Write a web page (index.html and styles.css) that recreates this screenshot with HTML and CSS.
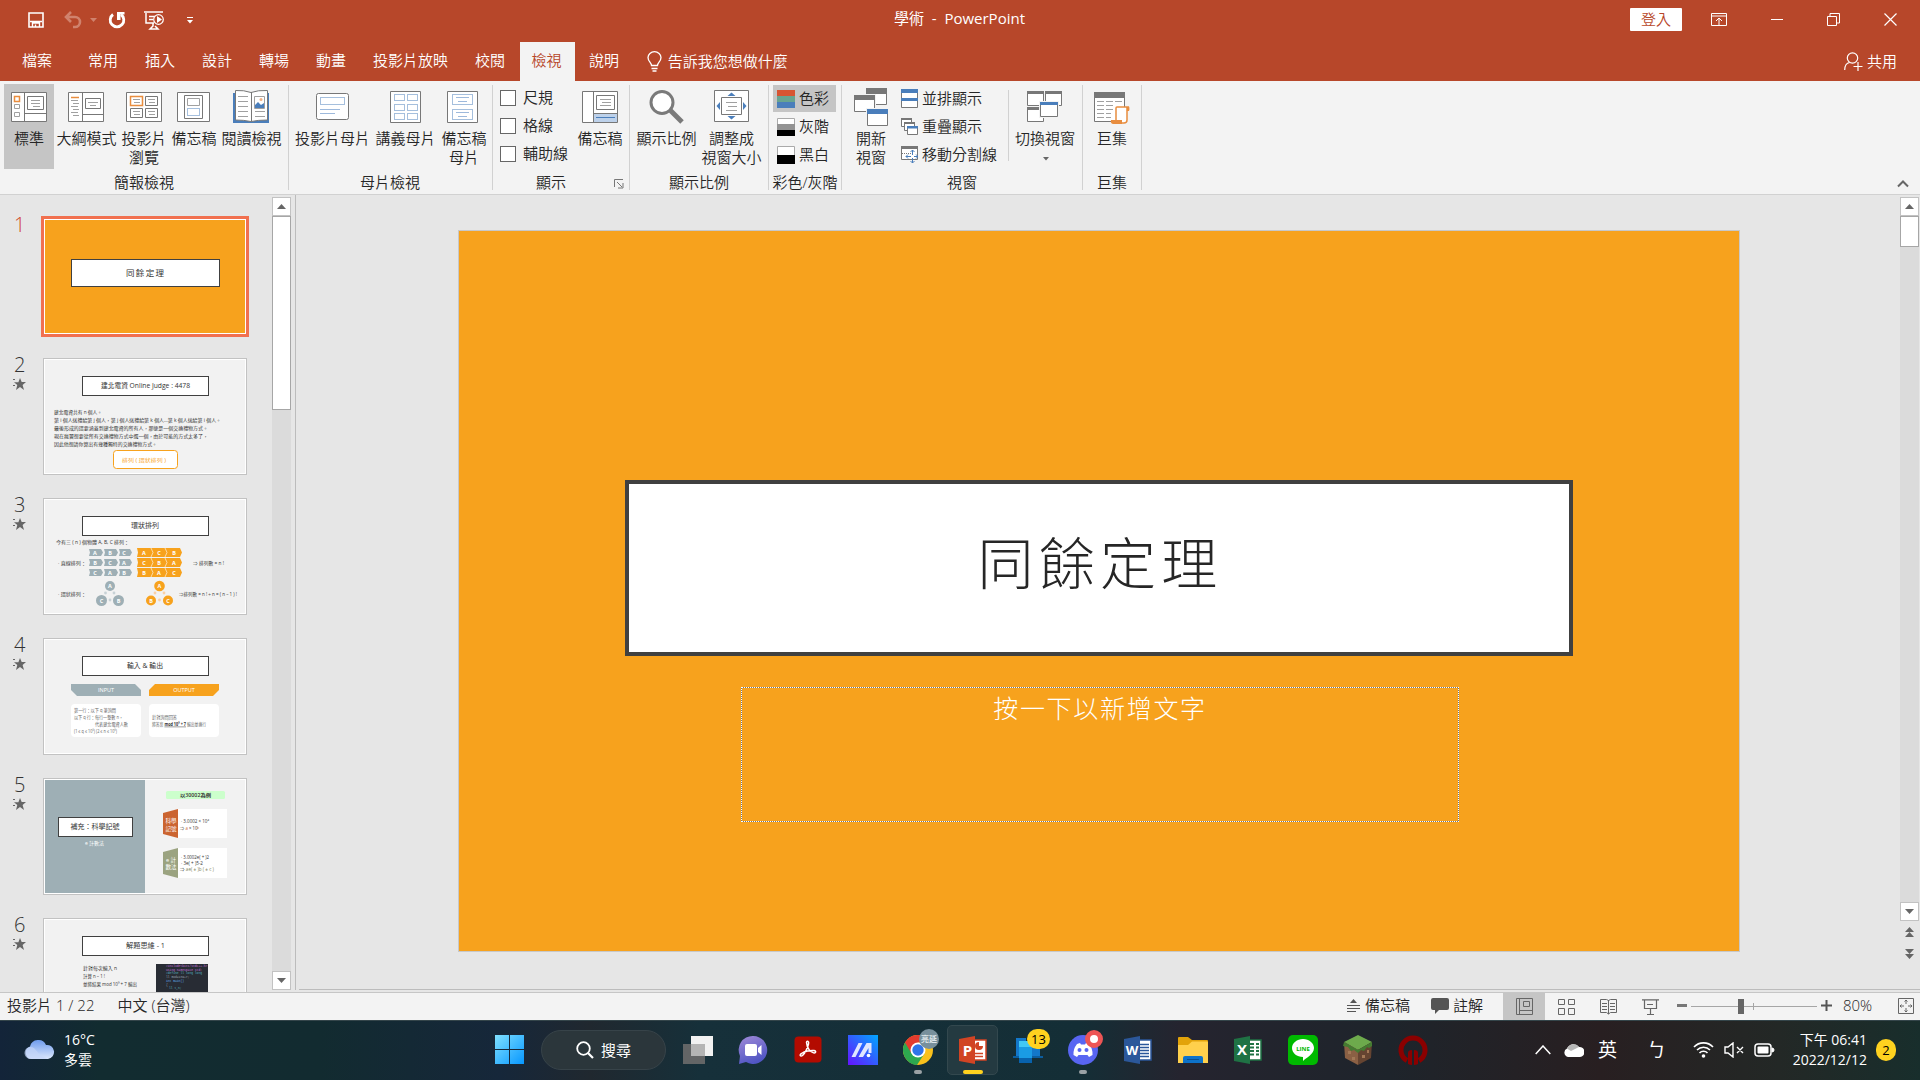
FILE: index.html
```html
<!DOCTYPE html>
<html lang="zh-Hant">
    <head>
        <meta charset="UTF-8" />
        <meta name="viewport" content="width=device-width, initial-scale=1.0" />
        <title>學術 - PowerPoint</title>
        <link rel="stylesheet" href="styles.css">
    </head>
    <body>
        <header class="titlebar">
            <div class="quick">
                <svg class="q-save" width="16" height="16" viewBox="0 0 16 16"><path d="M1 1h14v14H1z" fill="none" stroke="#fff" stroke-width="1.6"/><path d="M2 9.500h12M4.500 15v-4h7v4M7.500 12.500V15" fill="none" stroke="#fff" stroke-width="1.400"/></svg>
                <svg class="q-undo" width="19" height="18" viewBox="0 0 19 18"><path d="M7 1L2 6l5 5M2 6h9a5 5 0 0 1 0 10H9" fill="none" stroke="#d0826d" stroke-width="2.6"/></svg>
                <svg class="q-arrow" width="7" height="4"><path d="M0 0h7L3.500 4z" fill="#d0826d"/></svg>
                <svg class="q-redo" width="18" height="18" viewBox="0 0 18 18"><path d="M5 3.500a6.800 6.800 0 1 0 8 0" fill="none" stroke="#fff" stroke-width="2.800"/><path d="M9 1h7.500v2.500h-4V9H9z" fill="#fff"/></svg>
                <svg class="q-show" width="21" height="19" viewBox="0 0 21 19"><path d="M0 1h19M2 2v10h8M5 5.500h6M5 8.500h4M9 12v3l-3 3h8l-3-3" fill="none" stroke="#fff" stroke-width="1.500"/><circle cx="14.500" cy="8.500" r="4.800" fill="#b7472a" stroke="#fff" stroke-width="1.200"/><path d="M13 5l5 3.500-5 3.500z" fill="#fff"/></svg>
                <svg class="q-more" width="6" height="7"><path d="M0 .5h6" stroke="#fff"/><path d="M0 3h6L3 6.500z" fill="#fff"/></svg>
            </div>
            <div class="doc-name">學術&nbsp; -&nbsp; PowerPoint</div>
            <div class="window-btns">
                <span class="login">登入</span>
                <svg width="16" height="13"><path d="M.5.5h15v12H.5zM.5 3h15M8 12V5M5 8l3-3 3 3" fill="none" stroke="#fff"/></svg>
                <svg width="12" height="13"><path d="M0 6.500h12" stroke="#fff"/></svg>
                <svg width="13" height="13"><path d="M.5 3.500h9v9h-9zM3 3V.5h9.500V10H10" fill="none" stroke="#fff"/></svg>
                <svg width="13" height="13"><path d="M.5.5l12 12M12.500.5l-12 12" stroke="#fff" stroke-width="1.200"/></svg>
            </div>
        </header>

        <nav class="tabs">
            <span class="tab file">檔案</span>
            <span class="tab">常用</span>
            <span class="tab">插入</span>
            <span class="tab">設計</span>
            <span class="tab">轉場</span>
            <span class="tab">動畫</span>
            <span class="tab">投影片放映</span>
            <span class="tab">校閱</span>
            <span class="tab active">檢視</span>
            <span class="tab">說明</span>
            <span class="tell">
                <svg width="15" height="21" viewBox="0 0 15 21"><path d="M4.500 14.500c0-3-3.500-4-3.500-8a6.500 5.800 0 0 1 13 0c0 4-3.500 5-3.500 8zM4.500 17.500h6M5.500 20h4" fill="none" stroke="#fff" stroke-width="1.300"/></svg>
                告訴我您想做什麼
            </span>
            <span class="share">
                <svg width="19" height="19" viewBox="0 0 19 19"><circle cx="8.500" cy="6" r="5.200" fill="none" stroke="#fff" stroke-width="1.200"/><path d="M.7 18c0-4 2-7 5-7.500M14 10v9M9.500 14.500h9" fill="none" stroke="#fff" stroke-width="1.200"/></svg>
                共用
            </span>
        </nav>

        <section class="ribbon">
            <div class="group g-views">
                <div class="group-body">
                    <div class="big selected w50">
                        <svg width="40" height="40" viewBox="0 0 40 40"><path d="M2.500 4.500h35v29h-35z" class="page"/><path d="M15.500 4.500v29M15.500 25.500h22" class="ln"/><path d="M18.500 8.500h16v13h-16z" class="page"/><path d="M22 12.500h9M22 15.500h9M24 18.500h7" class="thin"/><path d="M5.500 8.500h5v5h-5z" class="orange"/><path d="M5.500 16.500h5v4h-5zM5.500 24.500h5v4h-5z" class="thin"/></svg>
                        <span>標準</span>
                    </div>
                    <div class="big w64">
                        <svg class="nudge-left" width="40" height="40" viewBox="0 0 40 40"><path d="M2.500 4.500h35v29h-35z" class="page"/><path d="M16.500 4.500v29M16.500 26.500h21" class="ln"/><path d="M19.500 10.500h15v10h-15z" class="page"/><path d="M22 14.500h10M24 17.500h6M5 12.500h7M7 15.500h6M5 18.500h7M7 21.500h6M5 24.500h7M7 27.500h6" class="thin"/><path d="M5 9.500h8" class="orange"/></svg>
                        <span>大綱模式</span>
                    </div>
                    <div class="big w50">
                        <svg width="40" height="40" viewBox="0 0 40 40"><path d="M2.500 4.500h35v29h-35z" class="page"/><path d="M21.500 8.500h12v9h-12zM6.500 20.500h12v9h-12zM21.500 20.500h12v9h-12z" class="ln"/><path d="M9 11.500h7M10 14.500h6M24 11.500h7M25 14.500h6M9 23.500h7M10 26.500h6M24 23.500h7M25 26.500h6" class="thin"/><path d="M6.500 8.500h12v9h-12z" class="orange"/></svg>
                        <span>投影片<br>瀏覽</span>
                    </div>
                    <div class="big w50">
                        <svg width="40" height="40" viewBox="0 0 40 40"><path d="M3.500 4.500h32v29h-32z" class="page"/><path d="M10.500 7.500h18v23h-18z" class="ln"/><path d="M13.500 10.500h12v7h-12z" class="thin"/><path d="M13.500 20.500h12v7h-12z" class="dots"/></svg>
                        <span>備忘稿</span>
                    </div>
                    <div class="big w64">
                        <svg class="nudge-left" width="40" height="40" viewBox="0 0 40 40"><path d="M2 5h36v30H2z" fill="#4a7ebb"/><path d="M4.500 2.500Q13 2 20 4.500Q27 2 36.500 2.500V32Q27 32 20 33.500Q13 32 4.500 32z" class="page"/><path d="M20.500 4v29" class="ln"/><path d="M7 8.500h10M7 13.500h10M7 18.500h10M7 23.500h10M7 28.500h10M24 23.500h10M24 28.500h10" class="thin"/><path d="M23.500 8.500h10v12h-10z" class="thin"/><circle cx="30" cy="11.500" r="1.500" fill="#f4b183"/><path d="M24 20v-3l3-3 3 3 3-2v5z" fill="#4a7ebb"/></svg>
                        <span>閱讀檢視</span>
                    </div>
                </div>
                <div class="group-name">簡報檢視</div>
            </div>

            <div class="group g-master">
                <div class="group-body">
                    <div class="big w75">
                        <svg class="nudge-left" width="40" height="40" viewBox="0 0 40 40"><rect x="4.500" y="5.500" width="32" height="26" rx="2" class="page"/><path d="M8.500 9.500h24v7h-24z" class="dots"/><path d="M8 21.500h20M8 25.500h15" stroke="#9db9dc"/></svg>
                        <span>投影片母片</span>
                    </div>
                    <div class="big w68">
                        <svg class="nudge-left" width="40" height="40" viewBox="0 0 40 40"><path d="M5.500 3.500h30v31h-30z" class="page"/><path d="M9.500 6.500h10v6h-10zM22.500 6.500h10v6h-10zM9.500 16.500h10v6h-10zM22.500 16.500h10v6h-10zM9.500 25.500h10v6h-10zM22.500 25.500h10v6h-10z" class="dots"/></svg>
                        <span>講義母片</span>
                    </div>
                    <div class="big w50">
                        <svg class="nudge-left" width="40" height="40" viewBox="0 0 40 40"><path d="M4.500 3.500h30v31h-30z" class="page"/><path d="M9.500 6.500h20v10h-20zM9.500 21.500h20v10h-20z" class="dots"/><path d="M13 9.500h13M15 13.500h9M13 24.500h13M15 28.500h9" stroke="#9db9dc"/></svg>
                        <span>備忘稿<br>母片</span>
                    </div>
                </div>
                <div class="group-name">母片檢視</div>
            </div>

            <div class="group g-show">
                <div class="group-body">
                    <div class="checks">
                        <label><i class="box"></i>尺規</label>
                        <label><i class="box"></i>格線</label>
                        <label><i class="box"></i>輔助線</label>
                    </div>
                    <div class="big w50">
                        <svg width="40" height="40" viewBox="0 0 40 40"><path d="M2.500 3.500h35v31h-35z" class="page"/><path d="M14 26h23v8H14z" fill="#bdd1ea"/><path d="M13.500 3.500v31M13.500 25.500h24" class="ln"/><path d="M16.500 7.500h18v14h-18z" class="page"/><path d="M20 11.500h11M22 14.500h9M20 17.500h11" class="thin"/><path d="M16 29.500h19" stroke="#4a7ebb"/></svg>
                        <span>備忘稿</span>
                    </div>
                </div>
                <div class="group-name">顯示<svg class="launcher" width="10" height="10"><path d="M.5 8V.5H9M3 3l5 5M9 4v5H4" fill="none" stroke="#777"/></svg></div>
            </div>

            <div class="group g-zoom">
                <div class="group-body">
                    <div class="big w64">
                        <svg width="40" height="40" viewBox="0 0 40 40"><circle cx="15" cy="14.500" r="11" fill="#fff" stroke="#7a7a7a" stroke-width="3"/><path d="M23 22l12 12" stroke="#7a7a7a" stroke-width="5"/></svg>
                        <span>顯示比例</span>
                    </div>
                    <div class="big w64">
                        <svg width="40" height="40" viewBox="0 0 40 40"><path d="M2.500 2.500h34v31h-34z" class="page"/><path d="M9.500 9.500h20v17h-20z" class="page"/><path d="M14 14.500h11M16 18.500h9M14 22.500h11" class="thin"/><path d="M15.500 8l4-3.500 4 3.500zM15.500 28l4 3.500 4-3.500zM8 14v8l-3.500-4zM31 14v8l3.500-4z" fill="#4a7ebb"/></svg>
                        <span>調整成<br>視窗大小</span>
                    </div>
                </div>
                <div class="group-name">顯示比例</div>
            </div>

            <div class="group g-color">
                <div class="group-body rows">
                    <div class="row selected"><svg width="18" height="18"><path d="M0 0h18v6H0z" fill="#d75533"/><path d="M0 6h18v6H0z" fill="#68a490"/><path d="M0 12h18v6H0z" fill="#4a7ebb"/></svg>色彩</div>
                    <div class="row"><svg width="18" height="18"><path d="M.5.5h17v17H.5z" fill="#fff" stroke="#aaa"/><path d="M0 6h18v6H0z" fill="#939393"/><path d="M0 12h18v6H0z"/></svg>灰階</div>
                    <div class="row"><svg width="18" height="18"><path d="M.5.5h17v17H.5z" fill="#fff" stroke="#aaa"/><path d="M0 9h18v9H0z"/></svg>黑白</div>
                </div>
                <div class="group-name">彩色/灰階</div>
            </div>

            <div class="group g-window">
                <div class="group-body">
                    <div class="big w50">
                        <svg width="40" height="40" viewBox="0 0 40 40"><path d="M15.500.5h20v16h-20z" class="page"/><path d="M15 0h21v6H15z" fill="#777"/><path d="M2.500 7.500h21v16h-21z" fill="#fff" stroke="#f3f3f3" stroke-width="3"/><path d="M3.500 7.500h20v16h-20z" class="page"/><path d="M3 7h21v5H3z" fill="#777"/><path d="M16.500 21.500h20v16h-20z" fill="#fff" stroke="#f3f3f3" stroke-width="3"/><path d="M16.500 21.500h20v16h-20z" class="page"/><path d="M16 21h21v5H16z" fill="#4a7ebb"/></svg>
                        <span>開新<br>視窗</span>
                    </div>
                    <div class="checks win-rows">
                        <div><svg width="17" height="19"><path d="M.5.5h16v18H.5z" class="page"/><path d="M0 0h17v4H0zM0 9h17v3H0z" fill="#4a7ebb"/></svg>並排顯示</div>
                        <div><svg width="17" height="17"><path d="M.5.5h10v8H.5z" class="page"/><path d="M0 0h11v2H0z" fill="#777"/><path d="M3.500 4.500h10v8h-10z" class="page"/><path d="M3 4h11v2H3z" fill="#777"/><path d="M6.500 8.500h10v8h-10z" class="page"/><path d="M6 8h11v2.500H6z" fill="#4a7ebb"/></svg>重疊顯示</div>
                        <div><svg width="17" height="17"><path d="M.5.5h16v13H.5z" class="page"/><path d="M0 0h17v3H0z" fill="#777"/><path d="M1 7.500h10" stroke="#777" stroke-dasharray="1 1"/><path d="M11.500 4v5M11.500 12v5M5 10.500h5M13 10.500h4M9.500 6l2-2 2 2M9.500 15l2 2 2-2M7 8.500l-2 2 2 2M15 8.500l2 2-2 2" fill="none" stroke="#4a7ebb"/></svg>移動分割線</div>
                    </div>
                    <div class="big switch">
                        <svg width="40" height="40" viewBox="0 0 40 40"><path d="M2.500 3.500h16v14h-16zM20.500 3.500h16v14h-16zM2.500 19.500h16v14h-16z" class="page"/><path d="M2 3h17v3H2zM20 3h17v3H20zM2 19h17v3H2z" fill="#777"/><path d="M15.500 14.500h17v14h-17z" fill="#fff" stroke="#f3f3f3" stroke-width="3"/><path d="M15.500 14.500h17v14h-17z" class="page"/><path d="M15 14h18v3H15z" fill="#4a7ebb"/></svg>
                        <span>切換視窗</span>
                        <svg class="drop" width="6" height="4"><path d="M0 0h6L3 3.500z" fill="#666"/></svg>
                    </div>
                </div>
                <div class="group-name">視窗</div>
            </div>

            <div class="group g-macro">
                <div class="group-body">
                    <div class="big w50">
                        <svg width="40" height="40" viewBox="0 0 40 40"><path d="M2.500 4.500h30v29h-30z" class="page"/><path d="M2 4h31v6H2z" fill="#777"/><path d="M5 13.500h7M14 13.500h7M23 13.500h7M5 17.500h7M14 17.500h7M5 21.500h7M14 21.500h7M5 25.500h7M14 25.500h5M5 29.500h7M14 29.500h5" class="thin"/><path d="M24 33V20q0-1 1-1h12q-2 1-2 3v10q0 3-3 3h-9" fill="#fff" stroke="#e88d3f" stroke-width="1.500"/><path d="M19 32h11v4h-9q-3-1-2-4zM34 19h3q1 2 0 4h-2z" fill="#e88d3f"/></svg>
                        <span>巨集</span>
                    </div>
                </div>
                <div class="group-name">巨集</div>
            </div>
            <svg class="collapse" width="12" height="8"><path d="M1 6.500l5-5 5 5" fill="none" stroke="#666" stroke-width="2"/></svg>
        </section>

        <main class="workspace">
            <aside class="panel">
                <ol class="slides">
                    <li class="current">
                        <div class="num">1</div>
                        <svg class="thumb" width="200" height="113" viewBox="0 0 200 113">
                            <rect width="200" height="113" fill="#f7a21d"/>
                            <rect x="26.500" y="39.500" width="148" height="27" class="frame"/>
                            <text x="81" y="56" textLength="38" class="head title">同餘定理</text>
                        </svg>
                    </li>
                    <li>
                        <div class="num">2<svg width="13" height="12" viewBox="0 0 13 12"><path d="M7 0l1.700 4H13L9.600 6.900 11 12 7 9 3 12l1.300-5L1 4.200h4.400zM0 1h2v1H0zM0 7h2v1H0z" fill="#666"/></svg></div>
                        <svg class="thumb" width="200" height="113" viewBox="0 0 200 113">
                            <rect x="37.500" y="16.500" width="126" height="19" class="frame"/>
                            <text x="56" y="28" textLength="89" lengthAdjust="spacingAndGlyphs" class="head">建北電資 Online Judge : 4478</text>
                            <g class="body">
                                <text x="9" y="54" textLength="48" lengthAdjust="spacingAndGlyphs">建北電資共有 n 個人。</text>
                                <text x="9" y="62" textLength="167" lengthAdjust="spacingAndGlyphs">第 i 個人送禮給第 j 個人，第 j 個人送禮給第 k 個人…第 k 個人送給第 i 個人。</text>
                                <text x="9" y="70" textLength="154" lengthAdjust="spacingAndGlyphs">最後形成的環要涵蓋到建北電資的所有人，那便是一個交換禮物方式。</text>
                                <text x="9" y="78" textLength="154" lengthAdjust="spacingAndGlyphs">現在瘋翼想要從所有交換禮物方式中選一個，由於可能的方式太多了，</text>
                                <text x="9" y="86" textLength="103" lengthAdjust="spacingAndGlyphs">因此他想請你算出有幾種獨特的交換禮物方式。</text>
                            </g>
                            <rect x="68.500" y="90.500" width="64" height="18" rx="3" fill="#fff" stroke="#f7a21d"/>
                            <text x="77" y="101.500" textLength="44" lengthAdjust="spacingAndGlyphs" class="body gold">排列 ( 環狀排列 )</text>
                        </svg>
                    </li>
                    <li>
                        <div class="num">3<svg width="13" height="12" viewBox="0 0 13 12"><path d="M7 0l1.700 4H13L9.600 6.900 11 12 7 9 3 12l1.300-5L1 4.200h4.400zM0 1h2v1H0zM0 7h2v1H0z" fill="#666"/></svg></div>
                        <svg class="thumb" width="200" height="113" viewBox="0 0 200 113">
                            <rect x="37.500" y="16.500" width="126" height="19" class="frame"/>
                            <text x="86" y="28" textLength="28" lengthAdjust="spacingAndGlyphs" class="head">環狀排列</text>
                            <g class="body">
                                <text x="11" y="44" textLength="73" lengthAdjust="spacingAndGlyphs">今有三 ( n ) 個物體 A, B, C 排列：</text>
                                <text x="13" y="64.500" textLength="28" lengthAdjust="spacingAndGlyphs">· 直線排列：</text>
                                <text x="148" y="64.500" textLength="31" lengthAdjust="spacingAndGlyphs">⇒ 排列數 = n !</text>
                                <text x="13" y="95.500" textLength="28" lengthAdjust="spacingAndGlyphs">· 環狀排列：</text>
                                <text x="134" y="95.500" textLength="58" lengthAdjust="spacingAndGlyphs">⇒排列數 = n ! ÷ n = ( n – 1 ) !</text>
                            </g>
                            <path d="M44 49h12l2 3.500-2 3.500H44l1-3.500zM59 49h12l2 3.500-2 3.500H59l1-3.500zM74 49h11l2 3.500-2 3.500H74l1-3.500zM44 59h12l2 3.500-2 3.500H44l1-3.500zM59 59h12l2 3.500-2 3.500H59l1-3.500zM74 59h11l2 3.500-2 3.500H74l1-3.500zM44 69h12l2 3.500-2 3.500H44l1-3.500zM59 69h12l2 3.500-2 3.500H59l1-3.500zM74 69h11l2 3.500-2 3.500H74l1-3.500z" fill="#9eafb5"/>
                            <path d="M92 48h43l2 4.500-2 4.500H92l1-4.500zM92 58h43l2 4.500-2 4.500H92l1-4.500zM92 68h43l2 4.500-2 4.500H92l1-4.500z" fill="#f7a21d"/>
                            <path d="M106 48l2 4.500-2 4.500m0 1l2 4.500-2 4.500m0 1l2 4.500-2 4.500M120 48l2 4.500-2 4.500m0 1l2 4.500-2 4.500m0 1l2 4.500-2 4.500" fill="none" stroke="#fff" stroke-width=".6"/>
                            <g fill="#9eafb5"><circle cx="65" cy="86" r="5"/><circle cx="56.500" cy="100.500" r="5.500"/><circle cx="73.500" cy="100.500" r="5.500"/></g>
                            <g fill="#f7a21d"><circle cx="114.500" cy="86" r="5.300"/><circle cx="106" cy="100.500" r="5"/><circle cx="123" cy="100.500" r="5"/></g>
                            <g fill="#c8d2d6"><circle cx="60.500" cy="93" r="1.400"/><circle cx="69" cy="93" r="1.400"/><circle cx="65" cy="100" r="1.400"/></g>
                            <g fill="#fad0a5"><circle cx="110" cy="93" r="1.400"/><circle cx="119" cy="93" r="1.400"/><circle cx="114.500" cy="100" r="1.400"/></g>
                            <g class="letters">
                                <text x="50" y="54.800">A</text><text x="65" y="54.800">B</text><text x="79" y="54.800">C</text>
                                <text x="50" y="64.800">B</text><text x="65" y="64.800">C</text><text x="79" y="64.800">A</text>
                                <text x="50" y="74.800">C</text><text x="65" y="74.800">A</text><text x="79" y="74.800">B</text>
                                <text x="99" y="54.800">A</text><text x="114" y="54.800">C</text><text x="129" y="54.800">B</text>
                                <text x="99" y="64.800">C</text><text x="114" y="64.800">B</text><text x="129" y="64.800">A</text>
                                <text x="99" y="74.800">B</text><text x="114" y="74.800">A</text><text x="129" y="74.800">C</text>
                                <text x="65" y="88">A</text><text x="56.500" y="102.500">C</text><text x="73.500" y="102.500">B</text>
                                <text x="114.500" y="88">A</text><text x="106" y="102.500">B</text><text x="123" y="102.500">C</text>
                            </g>
                        </svg>
                    </li>
                    <li>
                        <div class="num">4<svg width="13" height="12" viewBox="0 0 13 12"><path d="M7 0l1.700 4H13L9.600 6.900 11 12 7 9 3 12l1.300-5L1 4.200h4.400zM0 1h2v1H0zM0 7h2v1H0z" fill="#666"/></svg></div>
                        <svg class="thumb" width="200" height="113" viewBox="0 0 200 113">
                            <rect x="37.500" y="16.500" width="126" height="19" class="frame"/>
                            <text x="82" y="28" textLength="36" lengthAdjust="spacingAndGlyphs" class="head">輸入 &amp; 輸出</text>
                            <path d="M26 44h64l6 6v6H32l-6-6z" fill="#9eafb5"/>
                            <path d="M110 44h64v6l-6 6h-64v-6z" fill="#f7a21d"/>
                            <g class="letters plain"><text x="61" y="52">INPUT</text><text x="139" y="52">OUTPUT</text></g>
                            <rect x="26" y="64" width="70" height="33" rx="4" fill="#fff"/>
                            <rect x="104" y="64" width="70" height="33" rx="4" fill="#fff"/>
                            <g class="body pale">
                                <text x="29" y="71.700" textLength="42" lengthAdjust="spacingAndGlyphs">第一行：以下 q 筆詢問</text>
                                <text x="29" y="78.700" textLength="49" lengthAdjust="spacingAndGlyphs">以下 q 行：每行一整數 n，</text>
                                <text x="50" y="85.700" textLength="33" lengthAdjust="spacingAndGlyphs">代表建北電資人數</text>
                                <text x="29" y="92.700" textLength="43" lengthAdjust="spacingAndGlyphs">(1 ≤ q ≤ 10⁵) (2 ≤ n ≤ 10⁶)</text>
                                <text x="107" y="78.700" textLength="25" lengthAdjust="spacingAndGlyphs">針對詢問回答</text>
                                <text x="107" y="85.700" textLength="54" lengthAdjust="spacingAndGlyphs">將答案 <tspan class="mod">mod 10⁹ + 7</tspan> 輸出並換行</text>
                            </g>
                        </svg>
                    </li>
                    <li>
                        <div class="num">5<svg width="13" height="12" viewBox="0 0 13 12"><path d="M7 0l1.700 4H13L9.600 6.900 11 12 7 9 3 12l1.300-5L1 4.200h4.400zM0 1h2v1H0zM0 7h2v1H0z" fill="#666"/></svg></div>
                        <svg class="thumb" width="200" height="113" viewBox="0 0 200 113">
                            <rect width="100" height="113" fill="#9eafb5"/>
                            <rect x="13.500" y="37.500" width="74" height="19" class="frame"/>
                            <text x="25.500" y="49" textLength="49" lengthAdjust="spacingAndGlyphs" class="head">補充：科學記號</text>
                            <text x="40" y="65" textLength="19" lengthAdjust="spacingAndGlyphs" class="body white">e 計數法</text>
                            <rect x="121" y="11" width="59" height="8" rx="1.500" fill="#ccffcc"/>
                            <text x="135" y="17.200" textLength="31" lengthAdjust="spacingAndGlyphs" class="body note">以30002為例</text>
                            <rect x="133" y="29" width="49" height="29" fill="#fff"/>
                            <rect x="133" y="68" width="49" height="30" fill="#fff"/>
                            <path d="M118 33l15-4v29l-15-4z" fill="#cb6430"/>
                            <path d="M118 72l15-4v30l-15-4z" fill="#9ba380"/>
                            <g class="letters plain"><text x="126" y="43">科學</text><text x="126" y="50.500">記號</text><text x="126" y="81.500">e 計</text><text x="126" y="89">數法</text></g>
                            <g class="body">
                                <text x="136" y="43" textLength="28" lengthAdjust="spacingAndGlyphs">· 3.0002 × 10⁴</text>
                                <text x="135" y="49.500" textLength="19" lengthAdjust="spacingAndGlyphs">⇒ <tspan fill="#cb6430">a</tspan> × 10<tspan fill="#cb6430">ᵇ</tspan></text>
                                <text x="136" y="79" textLength="28" lengthAdjust="spacingAndGlyphs">· 3.0002e( + )2</text>
                                <text x="136" y="85" textLength="22" lengthAdjust="spacingAndGlyphs">· 3e( + )5-2</text>
                                <text x="135" y="91" textLength="34" lengthAdjust="spacingAndGlyphs">⇒ <tspan fill="#7f8760">ae( ± )b ( ± c )</tspan></text>
                            </g>
                        </svg>
                    </li>
                    <li>
                        <div class="num">6<svg width="13" height="12" viewBox="0 0 13 12"><path d="M7 0l1.700 4H13L9.600 6.900 11 12 7 9 3 12l1.300-5L1 4.200h4.400zM0 1h2v1H0zM0 7h2v1H0z" fill="#666"/></svg></div>
                        <svg class="thumb" width="200" height="113" viewBox="0 0 200 113">
                            <rect x="37.500" y="16.500" width="126" height="19" class="frame"/>
                            <text x="81" y="28" textLength="39" lengthAdjust="spacingAndGlyphs" class="head">解題思維 - 1</text>
                            <g class="body">
                                <text x="38" y="50" textLength="34" lengthAdjust="spacingAndGlyphs">針對每次輸入 n</text>
                                <text x="38" y="58.300" textLength="22" lengthAdjust="spacingAndGlyphs">計算 n – 1 !</text>
                                <text x="38" y="66.300" textLength="54" lengthAdjust="spacingAndGlyphs">並將結果 mod 10⁹ + 7 輸出</text>
                            </g>
                            <rect x="111" y="44" width="52" height="69" fill="#282c34"/>
                            <g class="code">
                                <text x="121" y="47" fill="#c678dd">#include&lt;bits/stdc++.h&gt;</text>
                                <text x="121" y="50.700" fill="#c678dd">using namespace std;</text>
                                <text x="121" y="54.400" fill="#56b6c2">#define ll long long</text>
                                <text x="121" y="58.100" fill="#98a2b3">ll mod=1e9+7;</text>
                                <text x="121" y="61.800" fill="#61afef">int main()</text>
                                <text x="121" y="65.500" fill="#98a2b3">{</text>
                                <text x="124" y="69.200" fill="#56b6c2">ll t,n;</text>
                            </g>
                        </svg>
                    </li>
                </ol>
                <div class="scroll">
                    <span class="sbtn"><svg width="9" height="5"><path d="M0 5h9L4.500 0z" fill="#666"/></svg></span>
                    <span class="grip"></span>
                    <span class="sbtn end"><svg width="9" height="5"><path d="M0 0h9L4.500 5z" fill="#666"/></svg></span>
                </div>
            </aside>

            <section class="stage">
                <div class="canvas">
                    <div class="slide">
                        <h1 class="slide-title">同餘定理</h1>
                        <p class="slide-sub">按一下以新增文字</p>
                    </div>
                </div>
                <div class="side">
                    <div class="scroll">
                        <span class="sbtn"><svg width="9" height="5"><path d="M0 5h9L4.500 0z" fill="#666"/></svg></span>
                        <span class="grip short"></span>
                        <span class="sbtn end"><svg width="9" height="5"><path d="M0 0h9L4.500 5z" fill="#666"/></svg></span>
                    </div>
                    <svg width="9" height="10"><path d="M0 5h9L4.500 0zM0 10h9L4.500 5z" fill="#666"/></svg>
                    <svg width="9" height="10"><path d="M0 0h9L4.500 5zM0 5h9L4.500 10z" fill="#666"/></svg>
                </div>
            </section>
        </main>

        <div class="status">
            <span class="page-no">投影片 1 / 22</span>
            <span class="language">中文 (台灣)</span>
            <span class="notes"><svg width="13" height="13"><path d="M6.500 0l3.500 4H3z" fill="#555"/><path d="M0 6.500h13M0 9.500h13M0 12.500h9" stroke="#555"/></svg>備忘稿</span>
            <span class="comments"><svg width="18" height="16"><path d="M2 0h14q2 0 2 2v8q0 2-2 2H8l-4 4v-4H2q-2 0-2-2V2q0-2 2-2z" fill="#555"/></svg>註解</span>
            <span class="view on"><svg width="17" height="17"><path d="M.5.500h16v16H.5zM3.500.5v16M3.500 12.500h13M7.500 3.500h6v5h-6z" fill="none" stroke="#666"/></svg></span>
            <span class="view"><svg width="17" height="16"><path d="M.5.5h6v5h-6zM10.500.5h6v5h-6zM.5 9.500h6v6h-6zM10.500 9.500h6v6h-6z" fill="none" stroke="#666"/></svg></span>
            <span class="view"><svg width="17" height="16"><path d="M.5.5h6l2 1 2-1h6v13h-6l-2 1.500-2-1.500h-6zM8.500 1v14M2 4.500h5M2 7.500h5M2 10.500h5M10 4.500h5M10 7.500h5M10 10.500h5" fill="none" stroke="#666"/></svg></span>
            <span class="view"><svg width="17" height="16"><path d="M0 .8h17M2.500 1v8.500h12V1M5 5.500h6M8.500 10v5M5 15.500h7" fill="none" stroke="#666" stroke-width="1.200"/></svg></span>
            <svg class="minus" width="10" height="3"><path d="M0 0h10v3H0z" fill="#777"/></svg>
            <svg class="slider" width="126" height="16"><path d="M0 8.500h126M62.500 5v7" stroke="#a6a6a6"/><path d="M47 1h6v15h-6z" fill="#666"/></svg>
            <svg class="plus" width="11" height="11"><path d="M0 5.500h11M5.500 0v11" stroke="#555" stroke-width="2"/></svg>
            <span class="percent">80%</span>
            <svg class="fit" width="16" height="16"><path d="M.5.500h15v15H.5z" fill="none" stroke="#666"/><path d="M8 2v4M8 10v4M2 8h4M10 8h4M6.500 3.500L8 2l1.500 1.500M6.500 12.500L8 14l1.500-1.500M3.500 6.500L2 8l1.500 1.500M12.500 6.500L14 8l-1.500 1.500" fill="none" stroke="#666"/></svg>
        </div>

        <footer class="taskbar">
            <div class="weather">
                <svg width="31" height="20" viewBox="0 0 31 20"><defs><linearGradient id="cloud" x2="0" y2="1"><stop stop-color="#6f9cee"/><stop offset="1" stop-color="#dbe7fb"/></linearGradient></defs><path d="M7 19a6.500 6.500 0 0 1-1-12.500A8.500 8.500 0 0 1 22 5a7 7 0 1 1 2 14z" fill="url(#cloud)"/><path d="M7 19a6 6 0 1 1 4-10l5 6 8 4z" fill="#c5d6f8" opacity=".7"/></svg>
                <div>16°C<br>多雲</div>
            </div>
            <div class="apps">
                <span class="app"><svg width="29" height="29"><defs><linearGradient id="win" x2="1" y2="1"><stop stop-color="#7fe0ff"/><stop offset="1" stop-color="#0797ff"/></linearGradient></defs><path d="M0 0h14v14H0zM15 0h14v14H15zM0 15h14v14H0zM15 15h14v14H15z" fill="url(#win)"/></svg></span>
                <div class="search"><svg width="18" height="18"><circle cx="7.500" cy="7.500" r="6.300" fill="none" stroke="#fff" stroke-width="1.800"/><path d="M12 12l5 5" stroke="#fff" stroke-width="2.200"/></svg>搜尋</div>
                <span class="app"><svg width="30" height="28"><path d="M8 0h22v20H8z" fill="#f1f1f1"/><path d="M0 8h22v20H0z" fill="#6b6b6b" opacity=".9"/><path d="M8 8h14v12H8z" fill="#b4b4b4"/></svg></span>
                <span class="app"><svg width="30" height="30"><defs><linearGradient id="chat" x2=".4" y2="1"><stop stop-color="#a08ad8"/><stop offset="1" stop-color="#5156c4"/></linearGradient></defs><path d="M15 1a14 14 0 1 1-7 26L1 29l1-8A14 14 0 0 1 15 1z" fill="url(#chat)"/><rect x="7" y="9" width="12" height="12" rx="2" fill="#fff"/><path d="M20 13l3.500-3v10L20 17z" fill="#fff"/></svg></span>
                <span class="app"><svg width="28" height="27"><rect x=".5" y=".5" width="27" height="26" rx="4" fill="#b30b00"/><path d="M12.500 6.500c.5-2 2.800-1.500 2 1.500-1 4-3.500 9-6 11.500-2 1.500-3.500-.5-1-2 3-2 9-3.500 12.500-3 2.500.5 2 2.800-.5 2.300-3-.8-6.500-4.300-7-10.300z" fill="none" stroke="#fff" stroke-width="1.500"/></svg></span>
                <span class="app"><svg width="30" height="30"><defs><linearGradient id="asus" x1="0" y1="1" x2="1" y2="0"><stop stop-color="#6512ff"/><stop offset="1" stop-color="#00a8ff"/></linearGradient></defs><path d="M0 0h30v30H0z" fill="url(#asus)"/><path d="M3.500 22L10.500 8h4l-7 14zM10.500 22l8-14h5v10h-3v-5l-5.500 9z" fill="#e0e6ff"/><circle cx="20.500" cy="20.500" r="1.800" fill="#fff"/></svg></span>
                <span class="app"><svg width="30" height="30"><circle cx="15" cy="15" r="15" fill="#f9c11c"/><path d="M2 7.500A15 15 0 0 0 14 30l7.500-11.500L15 15z" fill="#2da84f"/><path d="M2 7.500A15 15 0 0 1 28 7.500H15L8.500 18.500z" fill="#e33b2e"/><circle cx="15" cy="15" r="7.500" fill="#fff"/><circle cx="15" cy="15" r="5.700" fill="#2f74e8"/></svg><i class="badge user">亮延</i><i class="dot"></i></span>
                <span class="app current-app"><svg width="28" height="28"><path d="M12 4h15v20H12z" fill="#fff" stroke="#d14424" stroke-width="1.500"/><circle cx="20" cy="10" r="4" fill="#d14424"/><path d="M20 10V5h5v5z" fill="#fff"/><path d="M16 17.500h8M16 20.500h8" stroke="#d14424" stroke-width="1.500"/><path d="M0 3l16-3v28L0 25z" fill="#d14424"/><text x="8.500" y="19.500" class="office">P</text></svg><i class="dot wide"></i></span>
                <span class="app"><svg width="30" height="28"><path d="M3 2h10v20H3zM14 8h13v13H14z" fill="#1377c9"/><path d="M0 20h30v2H0z" fill="#0b5d9f"/><path d="M6 5h13v22H6z" fill="#1a9be4"/><path d="M6 5h13v6H6z" fill="#42c8f5"/><path d="M6 22h13v5H6z" fill="#0862ad"/></svg><i class="badge count">13</i></span>
                <span class="app"><svg width="30" height="30"><circle cx="15" cy="15" r="15" fill="#5865f2"/><path d="M9 9l3-1 1 1.500h4L18 8l3 1q4 5 3.500 11L21 22l-1.500-2h-9L9 22l-3.500-2Q5 14 9 9z" fill="#fff"/><circle cx="11.500" cy="15" r="2" fill="#5865f2"/><circle cx="18.500" cy="15" r="2" fill="#5865f2"/></svg><i class="badge live"></i><i class="dot"></i></span>
                <span class="app"><svg width="28" height="28"><path d="M12 4h15v20H12z" fill="#fff" stroke="#2b579a" stroke-width="1.500"/><path d="M16 8.500h9M16 11.500h9M16 14.500h9M16 17.500h9M16 20.500h9" stroke="#2b579a" stroke-width="1.300"/><path d="M0 3l16-3v28L0 25z" fill="#2b579a"/><text x="8" y="19" class="office w">W</text></svg></span>
                <span class="app"><svg width="30" height="28"><path d="M0 2q0-1 1-1h9l4 3h15q1 0 1 1v10H0z" fill="#e2a30a"/><path d="M0 9h10l4-3.500h15q1 0 1 1V27H0z" fill="#ffd04c"/><path d="M5 27v-5q0-2 2-2h16q2 0 2 2v5z" fill="#0d72c9"/><path d="M9 23.500h12" stroke="#084f91"/></svg></span>
                <span class="app"><svg width="28" height="28"><path d="M12 4h15v20H12z" fill="#fff" stroke="#1f7244" stroke-width="1.500"/><path d="M16 8h4M22 8h3M16 11.500h4M22 11.500h3M16 15h4M22 15h3M16 18.500h4M22 18.500h3" stroke="#1f7244" stroke-width="1.800"/><path d="M0 3l16-3v28L0 25z" fill="#1f7244"/><text x="8" y="19" class="office">X</text></svg></span>
                <span class="app"><svg width="30" height="30"><rect width="30" height="30" rx="5" fill="#00b900"/><path d="M15 4c6 0 11 4 11 9 0 6-8 10-11 13v-4C9 22 4 18 4 13s5-9 11-9z" fill="#fff"/><text x="15" y="16" class="line">LINE</text></svg></span>
                <span class="app"><svg width="30" height="30"><path d="M15 0l14 7-14 8L1 7z" fill="#6daa4c"/><path d="M1 7l14 8v15L2 23z" fill="#8a6044"/><path d="M29 7l-14 8v15l13-7z" fill="#654431"/><path d="M1 7l14 8 14-8v4l-3 2-2-1-3 4-3-1-3 3-4-3-3 1-3-4-5-1z" fill="#447c31"/><path d="M5 16h3v3H5zM9 22h3v3H9zM19 20h3v3h-3zM24 15h2v3h-2z" fill="#a27856"/></svg></span>
                <span class="app"><svg width="30" height="30"><path d="M9 25.500A12 12 0 1 1 21 25.500" fill="none" stroke="#8b0000" stroke-width="5"/><path d="M10 29V18q0-3 4-3v15q-2 0-4-1zM20 29V18q0-3-4-3v15q2 0 4-1z" fill="#8b0000"/></svg></span>
            </div>
            <div class="tray">
                <svg class="t-up" width="16" height="10"><path d="M.7 9L8 1l7.300 8" fill="none" stroke="#fff" stroke-width="1.500"/></svg>
                <svg class="t-cloud" width="21" height="15"><path d="M5 15a4.500 4.500 0 0 1-1-8.500A7 7 0 0 1 16 5a5 5 0 0 1 1 10z" fill="#fff"/><path d="M4 6.500A7 7 0 0 1 16 5L8 9z" fill="#b7b7b7"/></svg>
                <span class="t-ime">英</span>
                <span class="t-bopo">ㄅ</span>
                <svg class="t-wifi" width="21" height="17" viewBox="0 0 21 17"><path d="M1 6a13 13 0 0 1 19 0M4 9a9 9 0 0 1 13 0M6.500 12a5.500 5.500 0 0 1 8 0" fill="none" stroke="#fff" stroke-width="1.600"/><circle cx="10.500" cy="15" r="1.800" fill="#fff"/></svg>
                <svg class="t-mute" width="20" height="16" viewBox="0 0 20 16"><path d="M1 5h3l5-4v14l-5-4H1zM13 5l6 6M19 5l-6 6" fill="none" stroke="#fff" stroke-width="1.400"/></svg>
                <svg class="t-bat" width="21" height="14" viewBox="0 0 21 14"><rect x="1" y="1" width="16" height="12" rx="3" fill="none" stroke="#fff" stroke-width="1.500"/><rect x="3.500" y="3.500" width="11" height="7" rx="1" fill="#fff"/><path d="M18 5q2 0 2 2t-2 2z" fill="#fff" stroke="#fff"/></svg>
                <div class="clock">下午 06:41<br>2022/12/12</div>
                <span class="alerts">2</span>
            </div>
        </footer>
    </body>
</html>
```

FILE: styles.css
```css
* {
    box-sizing: border-box;
}

body {
    display: flex;
    flex-direction: column;
    width: 1920px;
    height: 1080px;
    margin: 0;
    overflow: hidden;
    font: 15px/19px "Open Sans", "Noto Sans CJK TC", sans-serif;
    font-weight: 350;
    color: #262626;
    background-color: #e6e6e6;
    white-space: nowrap;
}

svg {
    display: block;
    flex: none;
}

/* title bar */
.titlebar {
    display: grid;
    grid-template-columns: 1fr auto 1fr;
    align-items: center;
    height: 40px;
    color: #fff;
    background-color: #b7472a;
}

.quick {
    display: flex;
    align-items: center;
    padding-left: 28px;
}

.q-undo {
    margin-left: 20px;
}

.q-arrow {
    margin-left: 7px;
}

.q-redo {
    margin-left: 11px;
}

.q-show {
    margin-left: 18px;
}

.q-more {
    margin-left: 22px;
}

.doc-name {
    font-size: 15px;
    font-weight: 400;
    padding: 0 1px 3px 0;
}

.window-btns {
    display: flex;
    justify-content: flex-end;
    align-items: center;
    padding: 0 23px 2px 0;
    gap: 44px;
}

.login {
    width: 52px;
    height: 23px;
    margin-right: -15px;
    line-height: 22px;
    text-align: center;
    color: #b7472a;
    background-color: #fff;
    border-radius: 1px;
}

/* tabs */
.tabs {
    display: flex;
    height: 41px;
    padding-top: 3px;
    color: #fff;
    background-color: #b7472a;
}

.tab {
    padding: 8px 13.500px 0;
}

.tab.file {
    width: 74.500px;
    padding-left: 22px;
}

.tab.active {
    width: 55px;
    margin: -1px 1px 0;
    padding: 9px 12px 0;
    color: #b7472a;
    background-color: #f3f3f3;
}

.tell,
.share {
    display: flex;
    align-items: center;
    gap: 6px;
    padding-bottom: 1px;
    margin-left: 14px;
}

.share {
    gap: 4px;
    margin: 0 23px 0 auto;
}

/* ribbon */
.ribbon {
    position: relative;
    display: flex;
    height: 114px;
    background-color: #f3f3f3;
    border-bottom: 1px solid #d1d1d1;
}

.group {
    display: flex;
    flex-direction: column;
    height: 105px;
    margin-top: 4px;
    border-right: 1px solid #d1d1d1;
}

.group-body {
    display: flex;
    flex: none;
    height: 88px;
}

.group-name {
    position: relative;
    margin-left: -4px;
    text-align: center;
}

.g-views {
    width: 289px;
    padding-left: 4px;
}

.g-master {
    width: 204px;
    padding-left: 5px;
}

.g-show {
    width: 137px;
    padding-left: 7px;
}

.g-zoom {
    width: 139px;
    padding-left: 4px;
}

.g-color {
    width: 73px;
    padding-left: 4px;
}

.g-window {
    width: 241px;
    padding-left: 4px;
}

.g-macro {
    width: 59px;
    padding-left: 4px;
}

.g-master .group-name {
    margin-left: -6px;
}

.g-show .group-name {
    margin-left: -7px;
    padding-right: 20px;
}

.launcher {
    position: absolute;
    right: 5px;
    top: 6px;
}

.big {
    display: flex;
    flex-direction: column;
    align-items: center;
    height: 85px;
    padding-top: 4px;
    margin-top: -1px;
    text-align: center;
}

.big span {
    margin-top: 1px;
}

.w50 {
    width: 50px;
}

.w64 {
    width: 65px;
}

.w68 {
    width: 69px;
}

.w75 {
    width: 77px;
}

.nudge-left {
    margin-right: 2px;
}

.g-master .big.w50 {
    width: 48px;
}

.selected {
    background-color: #c5c5c5;
}

.page {
    fill: #fff;
    stroke: #777;
}

.ln {
    fill: none;
    stroke: #777;
}

.thin {
    fill: none;
    stroke: #a0a0a0;
}

.orange {
    fill: none;
    stroke: #e88d3f;
    stroke-width: 1.5;
}

.dots {
    fill: none;
    stroke: #4a7ebb;
    stroke-dasharray: 1 1;
}

.checks {
    display: flex;
    flex-direction: column;
    gap: 9px;
    width: 75px;
    padding-top: 3px;
}

.checks label,
.win-rows div {
    display: flex;
    align-items: center;
    height: 19px;
    gap: 7px;
}

.box {
    width: 16px;
    height: 16px;
    background-color: #fff;
    border: 1px solid #666;
}

.rows {
    flex-direction: column;
    gap: 1px;
}

.row {
    display: flex;
    align-items: center;
    gap: 4px;
    width: 63px;
    height: 27px;
    padding-left: 4px;
}

.win-rows {
    width: 107px;
    margin-left: 5px;
    padding-top: 4px;
}

.win-rows div {
    width: 100px;
    gap: 4px;
}

.switch {
    width: 73px;
    height: 71px;
    margin-top: 5px;
    padding-top: 0;
    border-left: 1px solid #d1d1d1;
}

.switch > svg:first-child {
    margin-top: -2px;
}

.drop {
    margin: 9px 0 0 2px;
}

.collapse {
    margin: 99px 11px 0 auto;
}

/* workspace */
.workspace {
    display: flex;
    height: 797px;
    background-color: #e6e6e6;
}

.panel {
    display: flex;
    width: 296px;
    height: 795px;
    border-right: 1px solid #bcbcbc;
}

.slides {
    width: 272px;
    height: 797px;
    margin: 0;
    padding: 21px 0 0;
    overflow: hidden;
    list-style: none;
}

.slides li {
    display: flex;
    height: 140px;
    padding-top: 2px;
}

.num {
    width: 43px;
    padding-left: 14px;
    font-size: 20px;
    font-weight: 300;
    line-height: 14px;
    color: #333;
}

.num svg {
    margin: 6px 0 0 -1px;
}

.thumb {
    box-sizing: content-box;
    padding: 1px;
    background-color: #f2f2f2;
    border: 1px solid #c2c2c2;
    box-shadow: inset 0 0 0 1px #fff;
    font-weight: 400;
}

.current .num {
    width: 41px;
    margin-right: 0;
    color: #d24726;
}

.current .thumb {
    margin-top: -2px;
    border: 3px solid #f1704f;
    background-color: #fff;
}

.frame {
    fill: #fff;
    stroke: #404040;
}

.head {
    font-size: 7px;
    fill: #333;
}

.title {
    font-size: 8.500px;
}

.body {
    font-size: 4.900px;
    fill: #333;
}

.gold {
    fill: #f7a21d;
}

.note {
    font-weight: 600;
}

.pale {
    fill: #666;
}

.white {
    fill: #fff;
}

.mod {
    font-weight: 700;
    text-decoration: underline;
    fill: #333;
}

.letters {
    font-size: 5.500px;
    font-weight: 700;
    text-anchor: middle;
    fill: #fff;
}

.letters.plain {
    font-weight: 400;
}

.code {
    font: 3px "Liberation Mono", monospace;
}

.scroll {
    display: flex;
    flex-direction: column;
    width: 19px;
    height: 793px;
    margin-top: 2px;
    background-color: #dbdbdb;
}

.sbtn {
    display: flex;
    align-items: center;
    justify-content: center;
    height: 19px;
    background-color: #fff;
    border: 1px solid #c2c2c2;
}

.sbtn.end {
    margin-top: auto;
}

.grip {
    height: 194px;
    background-color: #fff;
    border: 1px solid #a6a6a6;
}

.grip.short {
    height: 31px;
}

.stage {
    display: flex;
    flex: 1;
    height: 795px;
    margin-left: 3px;
    border-bottom: 1px solid #bcbcbc;
}

.canvas {
    flex: 1;
    padding: 35px 0 0 159px;
}

.slide {
    width: 1282px;
    height: 722px;
    padding: 249px 0 0 166px;
    background-color: #f7a21d;
    border: 1px solid #c8c8c8;
}

.slide-title {
    width: 948px;
    height: 176px;
    margin: 0;
    border: 4px solid #404040;
    background-color: #fff;
    font-size: 56px;
    font-weight: 300;
    line-height: 156px;
    letter-spacing: 5.200px;
    text-align: center;
    text-indent: 2px;
}

.slide-sub {
    width: 718px;
    height: 135px;
    margin: 31px 0 0 116px;
    padding-top: 7px;
    border: 1px dotted #fff;
    background: linear-gradient(#f7a21d, #f7a21d) padding-box, linear-gradient(#777, #777) border-box;
    font-size: 25px;
    font-weight: 300;
    line-height: 26px;
    letter-spacing: 1.700px;
    text-align: center;
    color: #fff;
}

.side {
    display: flex;
    flex-direction: column;
    align-items: flex-start;
    width: 20px;
}

.side .scroll {
    height: 724px;
}

.side > svg {
    margin: 6px 0 6px 5px;
}

/* status bar */
.status {
    display: flex;
    align-items: center;
    height: 28px;
    padding: 0 6px 2px 7px;
    background-color: #f3f3f3;
    border-top: 1px solid #c6c6c6;
}

.language {
    margin-left: 23px;
}

.notes,
.comments {
    display: flex;
    align-items: center;
    gap: 5px;
    margin-left: auto;
}

.comments {
    width: 72px;
    margin-left: 21px;
    gap: 4px;
}

.view {
    display: flex;
    align-items: center;
    justify-content: center;
    width: 42px;
    height: 27px;
    margin-bottom: -2px;
}

.view.on {
    background-color: #c5c5c5;
}

.minus {
    margin-left: 6px;
}

.slider {
    margin: 0 4px;
}

.percent {
    width: 66px;
    padding-left: 11px;
}

.page-no,
.language,
.percent {
    color: #262626;
}

/* taskbar */
.taskbar {
    display: flex;
    align-items: center;
    height: 60px;
    padding-bottom: 2px;
    color: #fff;
    font-size: 14px;
    line-height: 20px;
    background: linear-gradient(90deg, #132439 0, #122c30 100px, #122b30 320px, #16273a 500px, #20282f 590px, #16303a 700px, #142e36 1080px, #25242f 1180px, #1e242b 1390px, #281f21 1600px, #232826 1780px, #182e2c 1920px);
    border-top: 1px solid #34454a;
}

.weather {
    display: flex;
    align-items: center;
    gap: 9px;
    width: 482px;
    padding-left: 24px;
}

.weather div {
    font-weight: 400;
}

.apps {
    display: flex;
    align-items: center;
}

.app {
    position: relative;
    display: flex;
    align-items: center;
    justify-content: center;
    width: 55px;
    height: 50px;
}

.search {
    display: flex;
    align-items: center;
    justify-content: center;
    gap: 7px;
    width: 125px;
    height: 40px;
    margin: 0 4px;
    border: 1px solid #374349;
    border-radius: 20px;
    background-color: #2b363b;
    font-size: 15px;
    font-weight: 400;
}

.current-app {
    width: 51px;
    margin: 0 2px;
    border: 1px solid #33484e;
    border-radius: 5px;
    background-color: #243a41;
}

.dot {
    position: absolute;
    bottom: 1px;
    width: 8px;
    height: 4px;
    border-radius: 2px;
    background-color: #9aa1a5;
}

.dot.wide {
    bottom: 0;
    width: 20px;
    background-color: #ffd21f;
}

.badge {
    position: absolute;
    display: flex;
    align-items: center;
    justify-content: center;
    font-style: normal;
}

.user {
    top: 4px;
    right: 6px;
    width: 20px;
    height: 20px;
    border-radius: 10px;
    font-size: 8px;
    font-weight: 700;
    color: #dfe6e9;
    background-color: #78909c;
}

.count {
    top: 4px;
    right: 5px;
    width: 23px;
    height: 20px;
    border-radius: 10px;
    font-size: 13px;
    font-weight: 400;
    color: #000;
    background-color: #ffd21f;
}

.live {
    top: 5px;
    right: 7px;
    width: 18px;
    height: 18px;
    border: 5px solid #ed5555;
    border-radius: 9px;
    background-color: #fff;
}

.office {
    font: 700 15px "Open Sans", sans-serif;
    text-anchor: middle;
    fill: #fff;
}

.office.w {
    font-size: 13px;
}

.line {
    font: 700 6px "Open Sans", sans-serif;
    text-anchor: middle;
    fill: #00b900;
}

.tray {
    display: flex;
    align-items: center;
    margin-left: auto;
    padding-right: 24px;
}

.t-cloud {
    margin-left: 12px;
}

.t-ime,
.t-bopo {
    margin-left: 14px;
    font-size: 19px;
    font-weight: 400;
}

.t-bopo {
    margin-left: 30px;
}

.t-wifi {
    margin-left: 27px;
}

.t-mute {
    margin-left: 10px;
}

.t-bat {
    margin-left: 10px;
}

.clock {
    width: 92px;
    text-align: right;
    font-weight: 400;
}

.alerts {
    width: 20px;
    height: 22px;
    margin-left: 9px;
    border-radius: 10px;
    font-size: 13px;
    font-weight: 400;
    line-height: 22px;
    text-align: center;
    color: #000;
    background-color: #ffd21f;
}
```
